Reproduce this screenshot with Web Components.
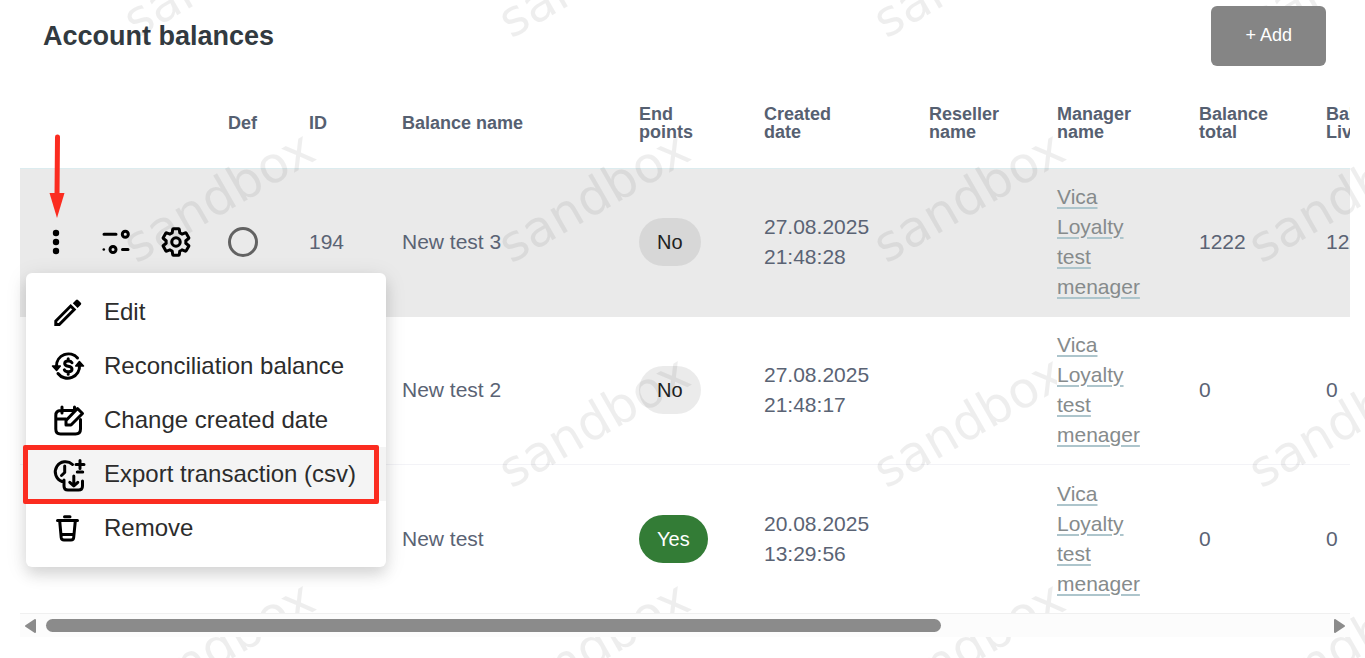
<!DOCTYPE html>
<html lang="en">
<head>
<meta charset="utf-8">
<meta name="viewport" content="width=device-width, initial-scale=1">
<title>Account balances</title>
<style>
  html, body { margin: 0; height: 100%; }
  body { background: #fff; font-family: "Liberation Sans", Arial, sans-serif; color: #5a6374; overflow: hidden; }
</style>
</head>
<body>
<balances-page></balances-page>
<script>
const define = (name, markup, setup) => {
  const template = document.createElement('template');
  template.innerHTML = markup;
  customElements.define(name, class extends HTMLElement {
    connectedCallback() {
      if (this.shadowRoot) return;
      this.attachShadow({ mode: 'open' }).append(template.content.cloneNode(true));
      if (setup) setup(this, this.shadowRoot);
    }
  });
};

const ICONS = {
  more: '<g fill="#000" stroke="none"><circle cx="16" cy="7" r="3.200"/><circle cx="16" cy="16" r="3.200"/><circle cx="16" cy="25" r="3.200"/></g>',
  sliders: '<path d="M4 8.200H16M22.500 23.500H28"/><circle cx="25.300" cy="8.200" r="3"/><circle cx="13" cy="23.500" r="3"/><circle cx="3.800" cy="23.500" r="1.300" fill="#000" stroke="none"/>',
  gear: '<g transform="translate(.15 .15) scale(1.32)" stroke-width="2.300"><path d="M19.430 12.980c.04-.32.07-.64.07-.98 0-.34-.03-.66-.07-.98l2.110-1.650c.19-.15.24-.42.12-.64l-2-3.460c-.09-.16-.26-.25-.44-.25-.06 0-.12.010-.17.030l-2.490 1c-.52-.4-1.080-.73-1.690-.98l-.38-2.650C14.460 2.180 14.250 2 14 2h-4c-.25 0-.46.18-.49.42l-.38 2.650c-.61.25-1.170.59-1.690.98l-2.490-1c-.06-.02-.12-.03-.18-.03-.17 0-.34.09-.43.25l-2 3.460c-.13.22-.07.49.12.64l2.110 1.650c-.04.32-.07.65-.07.98 0 .33.03.66.07.98l-2.110 1.650c-.19.15-.24.42-.12.64l2 3.460c.09.16.26.25.44.25.06 0 .12-.01.17-.03l2.490-1c.52.4 1.080.73 1.690.98l.38 2.650c.03.24.24.42.49.42h4c.25 0 .46-.18.49-.42l.38-2.650c.61-.25 1.170-.59 1.690-.98l2.490 1c.06.02.12.03.18.03.17 0 .34-.09.43-.25l2-3.460c.12-.22.07-.49-.12-.64z"/><circle cx="12" cy="12" r="3.200"/></g>',
  edit: '<path d="M3.800 28.500V25L18.700 10 22.200 13.500 7.300 28.500z" stroke-linejoin="miter"/><path d="M20.800 7.200 24 4Q25 3 26 4L28.800 6.800Q29.800 7.800 28.800 8.800L25.600 12z" fill="#000" stroke="none"/>',
  reconcile: '<path d="M4.500 16A12 12 0 0 1 25.500 8M27.500 15A12 12 0 0 1 6 23.500" /><path d="M0.500 16H8.300L4.600 20.500zM23.700 16H31.500L27.400 11.500z" fill="#000" stroke-width="1.500"/><path d="M20 12.700Q19 11 16.200 11 12.700 11 12.700 13.600 12.700 15.800 16.200 16.200 20 16.700 20 19 20 21.800 16.300 21.800 13 21.800 12.300 19.800M16.200 8.800V11M16.200 22V24.200"/>',
  calendar: '<path d="M21 6.500H8.500Q3.800 6.500 3.800 11.500V25Q3.800 30 8.500 30H23.500Q28.500 30 28.500 25V15.500M4 15H14M10 3V9"/><path d="M14 21V16.500L25.500 4.500 30.500 9.500 19 21z" fill="#fff"/><path d="M22.500 3V6"/>',
  exporting: '<path d="M20.500 6.500A10.200 10.200 0 1 0 10 23.500M12.700 8V14.500L9.500 17.500M28 2.500V10.500M24 6.500H32M25.300 14H30.700M12 22V28Q12 32 16 32H26.500Q30.500 32 30.500 28V23M21.800 18V27M17.800 24.300 21.800 28 25.800 24.300"/>',
  trash: '<path d="M5.500 8.500H25.500M12.500 4.800H18M7.700 9 9.200 25.500Q9.500 28 12 28H19Q21.500 28 21.700 25.500L23.300 9M9.200 22.500H21.800"/>'
};

define('app-icon', `
  <style>
    :host { display: block; width: 32px; height: 32px; flex: none; }
    svg { display: block; width: 32px; height: 32px; overflow: visible; fill: none; stroke: #000; stroke-width: 3; stroke-linecap: round; stroke-linejoin: round; }
  </style>
  <svg viewBox="0 0 32 32" aria-hidden="true"></svg>`,
  (host, root) => { root.querySelector('svg').innerHTML = ICONS[host.getAttribute('name')]; });

define('page-header', `
  <style>
    :host { display: flex; align-items: center; justify-content: space-between; padding: 6px 39px 12px 43px; }
    h1 { margin: 0; font-size: 27px; line-height: 32px; color: #323a40; }
    button { position: relative; z-index: 2; height: 60px; padding: 0 34px 2px; border: 0; border-radius: 6px; background: #858585; color: #fff; font: 18px/24px "Liberation Sans", Arial, sans-serif; }
  </style>
  <h1><slot></slot></h1>
  <button type="button">+ Add</button>`);

define('status-chip', `
  <style>
    :host { display: inline-flex; align-items: center; height: 48px; padding: 0 18px; border-radius: 24px; box-sizing: border-box; background: rgba(0,0,0,.08); color: #212121; font-size: 20px; line-height: 24px; vertical-align: middle; }
    :host([on]) { background: #337c36; color: #fff; }
  </style>
  <slot></slot>`);

define('row-actions', `
  <style>
    :host { display: flex; gap: 28px; padding-left: 20px; }
    button { display: block; padding: 0; border: 0; background: none; }
  </style>
  <button type="button" aria-label="More actions"><app-icon name="more"></app-icon></button>
  <button type="button" aria-label="Parameters"><app-icon name="sliders"></app-icon></button>
  <button type="button" aria-label="Settings"><app-icon name="gear"></app-icon></button>`);

define('balance-table', `
  <style>
    :host { display: block; overflow: hidden; }
    table { width: 1433px; table-layout: fixed; border-collapse: separate; border-spacing: 0; }
    th, td { box-sizing: border-box; text-align: left; vertical-align: middle; }
    th { height: 91px; padding: 0 57px 0 0; border-bottom: 1px solid #dcecef; font-size: 18px; line-height: 18px; color: #566071; }
    td { height: 148px; padding: 0 45px 2px 0; border-bottom: 1px solid #f3f3f7; font-size: 21px; line-height: 30px; }
    td:first-child, .wide { padding-right: 0; }
    th:nth-child(2) { padding-right: 45px; }
    .current td { background: #eaeaea; border-color: #eaeaea; }
    tr:last-child td { padding-bottom: 0; border-color: #fff; }
    a { position: relative; z-index: 2; display: block; background: #fff; color: #868b8c; text-decoration: underline; text-decoration-color: #adc5cc; text-decoration-thickness: 2px; text-underline-offset: 3px; }
    .current a { background: #eaeaea; }
    input { display: block; appearance: none; width: 30px; height: 30px; margin: 0; border: 3px solid #626262; border-radius: 50%; }
  </style>
  <table>
    <colgroup>
      <col style="width:208px"><col style="width:81px"><col style="width:93px"><col style="width:237px"><col style="width:125px">
      <col style="width:165px"><col style="width:128px"><col style="width:142px"><col style="width:127px"><col style="width:127px">
    </colgroup>
    <thead>
      <tr><th></th><th>Def</th><th>ID</th><th>Balance name</th><th>End points</th><th>Created date</th><th>Reseller name</th><th>Manager name</th><th>Balance total</th><th>Balance Live</th></tr>
    </thead>
    <tbody>
      <tr class="current"><td><row-actions></row-actions></td><td><input type="radio" name="def" aria-label="Default balance"></td><td>194</td><td>New test 3</td><td class="wide"><status-chip>No</status-chip></td><td>27.08.2025 21:48:28</td><td></td><td><a href="#manager">Vica Loyalty test menager</a></td><td>1222</td><td>1222</td></tr>
      <tr><td></td><td></td><td></td><td>New test 2</td><td class="wide"><status-chip>No</status-chip></td><td>27.08.2025 21:48:17</td><td></td><td><a href="#manager">Vica Loyalty test menager</a></td><td>0</td><td>0</td></tr>
      <tr><td></td><td></td><td></td><td>New test</td><td class="wide"><status-chip on>Yes</status-chip></td><td>20.08.2025 13:29:56</td><td></td><td><a href="#manager">Vica Loyalty test menager</a></td><td>0</td><td>0</td></tr>
    </tbody>
  </table>`);

define('scroll-rail', `
  <style>
    :host { position: relative; z-index: 2; display: flex; align-items: center; gap: 10px; height: 24px; padding: 0 5px; box-sizing: border-box; border-top: 1px solid #f0f0f0; background: #fcfcfc; }
    button { display: block; width: 11px; height: 14px; padding: 0; border: 0; background: none; }
    svg { display: block; width: 11px; height: 14px; fill: #8b8b8b; stroke: #8b8b8b; stroke-width: 2; stroke-linejoin: round; }
    .track { flex: 1; }
    .thumb { width: 70%; height: 13px; border-radius: 7px; background: #8b8b8b; }
  </style>
  <button type="button" aria-label="Scroll left"><svg viewBox="0 0 11 14"><path d="M10 1V13L1 7z"/></svg></button>
  <div class="track"><div class="thumb"></div></div>
  <button type="button" aria-label="Scroll right"><svg viewBox="0 0 11 14"><path d="M1 1V13L10 7z"/></svg></button>`);

define('menu-item', `
  <style>
    :host { display: block; position: relative; }
    button { display: flex; align-items: center; gap: 20px; width: 100%; height: 54px; padding: 0 0 0 26px; border: 0; background: none; color: #2c2c2c; font: 24px/36px "Liberation Sans", Arial, sans-serif; white-space: nowrap; }
    :host([active]) button { background: #f4f4f4; }
    :host([active])::after { content: ""; position: absolute; inset: -2px 7px -3px -3px; border: 5px solid #fb2c20; border-radius: 2px; }
  </style>
  <button type="button" role="menuitem"><slot name="icon"></slot><slot></slot></button>`);

define('action-menu', `
  <style>
    :host { display: block; box-sizing: border-box; width: 360px; padding: 12px 0; border-radius: 6px; background: #fff; box-shadow: 0 8px 14px rgba(0,0,0,.1), 0 4px 22px rgba(0,0,0,.1); }
  </style>
  <slot></slot>`);

define('pointer-arrow', `
  <style>:host { display: block; } svg { display: block; width: 16px; height: 84px; }</style>
  <svg viewBox="0 0 16 84" aria-hidden="true"><path d="M8.500 3 8 62" stroke="#fb2c20" stroke-width="5" stroke-linecap="round"/><path d="M.500 59H15.500L8 84z" fill="#fb2c20"/></svg>`);

define('sandbox-watermark', `
  <style>
    :host { position: absolute; inset: 0; overflow: hidden; pointer-events: none; z-index: 1; }
    svg { display: block; width: 100%; height: 100%; }
    text { font: 50px "DejaVu Sans", sans-serif; fill: #000; fill-opacity: .065; }
  </style>
  <svg aria-hidden="true"></svg>`,
  (host, root) => {
    const marks = [];
    for (let y = 39; y < innerHeight + 110; y += 225) {
      for (let x = 136; x < innerWidth; x += 375) {
        marks.push(`<text transform="translate(${x} ${y}) rotate(-30)">sandbox</text>`);
      }
    }
    root.querySelector('svg').innerHTML = marks.join('');
  });

define('balances-page', `
  <style>
    :host { display: block; position: relative; min-height: 100%; overflow: hidden; }
    main { padding: 0 15px 0 20px; }
    page-header { margin: 0 -15px 0 -20px; }
    action-menu { position: absolute; z-index: 3; left: 26px; top: 273px; }
    pointer-arrow { position: absolute; z-index: 3; left: 49px; top: 134px; }
  </style>
  <main>
    <page-header>Account balances</page-header>
    <balance-table></balance-table>
    <scroll-rail></scroll-rail>
  </main>
  <sandbox-watermark></sandbox-watermark>
  <action-menu role="menu">
    <menu-item><app-icon slot="icon" name="edit"></app-icon>Edit</menu-item>
    <menu-item><app-icon slot="icon" name="reconcile"></app-icon>Reconciliation balance</menu-item>
    <menu-item><app-icon slot="icon" name="calendar"></app-icon>Change created date</menu-item>
    <menu-item active><app-icon slot="icon" name="exporting"></app-icon>Export transaction (csv)</menu-item>
    <menu-item><app-icon slot="icon" name="trash"></app-icon>Remove</menu-item>
  </action-menu>
  <pointer-arrow></pointer-arrow>`);
</script>
</body>
</html>
